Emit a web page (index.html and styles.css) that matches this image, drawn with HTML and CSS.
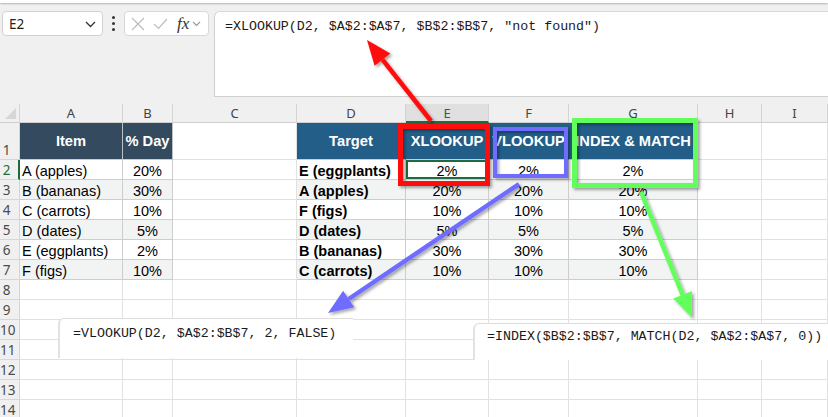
FILE: index.html
```html
<!DOCTYPE html>
<html>
<head>
<meta charset="utf-8">
<link rel="stylesheet" href="styles.css">
</head>
<body>
<div class="page">
  <div class="topstrip"></div>
  <div class="toolbar">
    <div class="namebox">
      <span class="nb-text">E2</span>
      <svg class="chev" width="11" height="7" viewBox="0 0 11 7"><path d="M1 1 L5.5 5.5 L10 1" fill="none" stroke="#333" stroke-width="1.3"/></svg>
    </div>
    <div class="dots"><span></span><span></span><span></span></div>
    <div class="fxbox">
      <svg width="14" height="14" viewBox="0 0 14 14"><path d="M1 1 L13 13 M13 1 L1 13" stroke="#bdbdbd" stroke-width="1.2" fill="none"/></svg>
      <svg width="15" height="12" viewBox="0 0 15 12"><path d="M1 6 L5.5 10.5 L14 1" stroke="#bdbdbd" stroke-width="1.2" fill="none"/></svg>
      <span class="fx">fx</span>
      <svg width="9" height="6" viewBox="0 0 9 6"><path d="M1 1 L4.5 4.5 L8 1" fill="none" stroke="#999" stroke-width="1.1"/></svg>
    </div>
    <div class="formula">=XLOOKUP(D2, $A$2:$A$7, $B$2:$B$7, "not found")</div>
  </div>

  <div class="sheet">
    <div class="corner"><span class="tri"></span></div>
    <div class="ch">A</div><div class="ch">B</div><div class="ch">C</div><div class="ch">D</div><div class="ch sel">E</div><div class="ch">F</div><div class="ch">G</div><div class="ch">H</div><div class="ch">I</div>

    <div class="rh r1">1</div>
    <div class="c hd1 ctr">Item</div><div class="c hd1 ctr">% Day</div><div class="c"></div>
    <div class="c hd2 ctr">Target</div><div class="c hd2 ctr">XLOOKUP</div><div class="c hd2 ctr clip">VLOOKUP</div><div class="c hd2 ctr clip">INDEX &amp; MATCH</div><div class="c"></div><div class="c"></div>

    <div class="rh rsel">2</div>
    <div class="c t">A (apples)</div><div class="c t ctr">20%</div><div class="c"></div>
    <div class="c t b">E (eggplants)</div><div class="c t ctr cellsel">2%</div><div class="c t ctr">2%</div><div class="c t ctr">2%</div><div class="c"></div><div class="c"></div>

    <div class="rh">3</div>
    <div class="c t alt">B (bananas)</div><div class="c t alt ctr">30%</div><div class="c"></div>
    <div class="c t alt b">A (apples)</div><div class="c t alt ctr">20%</div><div class="c t alt ctr">20%</div><div class="c t alt ctr">20%</div><div class="c"></div><div class="c"></div>

    <div class="rh">4</div>
    <div class="c t">C (carrots)</div><div class="c t ctr">10%</div><div class="c"></div>
    <div class="c t b">F (figs)</div><div class="c t ctr">10%</div><div class="c t ctr">10%</div><div class="c t ctr">10%</div><div class="c"></div><div class="c"></div>

    <div class="rh">5</div>
    <div class="c t alt">D (dates)</div><div class="c t alt ctr">5%</div><div class="c"></div>
    <div class="c t alt b">D (dates)</div><div class="c t alt ctr">5%</div><div class="c t alt ctr">5%</div><div class="c t alt ctr">5%</div><div class="c"></div><div class="c"></div>

    <div class="rh">6</div>
    <div class="c t">E (eggplants)</div><div class="c t ctr">2%</div><div class="c"></div>
    <div class="c t b">B (bananas)</div><div class="c t ctr">30%</div><div class="c t ctr">30%</div><div class="c t ctr">30%</div><div class="c"></div><div class="c"></div>

    <div class="rh">7</div>
    <div class="c t alt">F (figs)</div><div class="c t alt ctr">10%</div><div class="c"></div>
    <div class="c t alt b">C (carrots)</div><div class="c t alt ctr">10%</div><div class="c t alt ctr">10%</div><div class="c t alt ctr">10%</div><div class="c"></div><div class="c"></div>

    <div class="rh">8</div><div class="c"></div><div class="c"></div><div class="c"></div><div class="c"></div><div class="c"></div><div class="c"></div><div class="c"></div><div class="c"></div><div class="c"></div>
    <div class="rh">9</div><div class="c"></div><div class="c"></div><div class="c"></div><div class="c"></div><div class="c"></div><div class="c"></div><div class="c"></div><div class="c"></div><div class="c"></div>
    <div class="rh">10</div><div class="c"></div><div class="c"></div><div class="c"></div><div class="c"></div><div class="c"></div><div class="c"></div><div class="c"></div><div class="c"></div><div class="c"></div>
    <div class="rh">11</div><div class="c"></div><div class="c"></div><div class="c"></div><div class="c"></div><div class="c"></div><div class="c"></div><div class="c"></div><div class="c"></div><div class="c"></div>
    <div class="rh">12</div><div class="c"></div><div class="c"></div><div class="c"></div><div class="c"></div><div class="c"></div><div class="c"></div><div class="c"></div><div class="c"></div><div class="c"></div>
    <div class="rh">13</div><div class="c"></div><div class="c"></div><div class="c"></div><div class="c"></div><div class="c"></div><div class="c"></div><div class="c"></div><div class="c"></div><div class="c"></div>
    <div class="rh">14</div><div class="c"></div><div class="c"></div><div class="c"></div><div class="c"></div><div class="c"></div><div class="c"></div><div class="c"></div><div class="c"></div><div class="c"></div>
  </div>

  <div class="snip snip-v">=VLOOKUP(D2, $A$2:$B$7, 2, FALSE)</div>
  <div class="snip snip-i">=INDEX($B$2:$B$7, MATCH(D2, $A$2:$A$7, 0))</div>

  <svg class="overlay" width="828" height="417" viewBox="0 0 828 417">
    <defs>
      <filter id="sh" x="-20%" y="-20%" width="140%" height="140%">
        <feDropShadow dx="2" dy="2" stdDeviation="1.5" flood-color="#000" flood-opacity="0.35"/>
      </filter>
    </defs>
    <g filter="url(#sh)">
      <rect x="400.5" y="126.5" width="87" height="57" fill="none" stroke="#ff0a0a" stroke-width="5"/>
      <rect x="495" y="129" width="71" height="47" fill="none" stroke="#6f6cff" stroke-width="4"/>
      <rect x="574.5" y="120.5" width="121" height="65" fill="none" stroke="#62ff5c" stroke-width="5"/>

      <line x1="431" y1="121" x2="382.5" y2="59.6" stroke="#ff0a0a" stroke-width="4.5"/>
      <polygon points="367,40 390.4,53.4 374.6,65.8" fill="#ff0a0a"/>

      <line x1="519" y1="184" x2="348.7" y2="299" stroke="#6f6cff" stroke-width="4.5"/>
      <polygon points="328,313 354.3,307.3 343.1,290.7" fill="#6f6cff"/>

      <line x1="641" y1="192" x2="682.6" y2="294.8" stroke="#62ff5c" stroke-width="4.5"/>
      <polygon points="692,318 691.9,291.1 673.3,298.6" fill="#62ff5c"/>
    </g>
  </svg>
</div>
</body>
</html>
```

FILE: styles.css
```css
* { box-sizing: border-box; }
html, body { margin: 0; padding: 0; }
body {
  width: 828px;
  height: 417px;
  overflow: hidden;
  background: #f0f0f0;
  font-family: "Liberation Sans", Arial, sans-serif;
}
.page { position: relative; width: 828px; height: 417px; overflow: hidden; }

.topstrip {
  height: 3px;
  background: #fff;
  box-shadow: 0 1px 2px rgba(0,0,0,0.25);
}

.toolbar {
  display: flex;
  align-items: flex-start;
  height: 101px;
  padding-top: 8px;
  padding-left: 2px;
}
.namebox {
  width: 101px;
  height: 25px;
  background: #fff;
  border: 1px solid #d2d2d2;
  border-radius: 4px;
  display: flex;
  align-items: center;
  justify-content: space-between;
  padding: 0 6px 0 6px;
  font-family: "Noto Sans", "Open Sans", sans-serif;
  font-size: 13.5px;
  color: #222;
}
.namebox .chev { margin-top: 1px; }
.dots {
  width: 21px;
  height: 25px;
  display: flex;
  flex-direction: column;
  align-items: center;
  justify-content: center;
  gap: 3px;
}
.dots span { width: 3px; height: 3px; border-radius: 50%; background: #333; }
.fxbox {
  width: 85px;
  height: 25px;
  background: #fff;
  border: 1px solid #d8d8d8;
  border-radius: 4px;
  display: flex;
  align-items: center;
  padding: 0 3px 0 6px;
  gap: 9px;
}
.fxbox svg:nth-child(2) { margin-left: -1px; }
.fx {
  font-family: "Liberation Serif", "DejaVu Serif", serif;
  font-style: italic;
  font-size: 17px;
  color: #333;
  margin-right: -6px;
}
.formula {
  margin-left: 5px;
  flex: 1;
  height: 86px;
  background: #fff;
  border-top: 1px solid #d8d8d8;
  border-left: 1px solid #cfcfcf;
  border-bottom: 1px solid #d0d0d0;
  border-top-left-radius: 6px;
  padding: 6px 0 0 10px;
  font-family: "Liberation Mono", "DejaVu Sans Mono", monospace;
  font-size: 13.3px;
  line-height: 18px;
  color: #1a1a1a;
  white-space: pre;
}

.sheet {
  display: grid;
  grid-template-columns: 20px 103px 50px 124px 109px 83px 80px 129px 64px 66px;
  grid-template-rows: 19px 37px repeat(13, 20px);
  background: #fff;
}
.corner {
  background: #f0f0f0;
  border-right: 1px solid #d4d4d4;
  border-bottom: 1px solid #cfcfcf;
  position: relative;
}
.tri {
  position: absolute;
  right: 3px;
  bottom: 3px;
  width: 0; height: 0;
  border-left: 11px solid transparent;
  border-bottom: 11px solid #d6d6d6;
}
.ch {
  background: #f0f0f0;
  border-right: 1px solid #d4d4d4;
  border-bottom: 1px solid #cfcfcf;
  text-align: center;
  font-family: "Noto Sans", "Open Sans", sans-serif;
  font-size: 13px;
  line-height: 19px;
  color: #444;
}
.ch.sel {
  background: #e0e0e0;
  color: #1e6b41;
  border-bottom: 2px solid #1e6b41;
}
.rh {
  background: #f0f0f0;
  border-right: 1px solid #d4d4d4;
  border-bottom: 1px solid #d6d6d6;
  font-family: "Noto Sans", "Open Sans", sans-serif;
  font-size: 13.5px;
  color: #4a4a4a;
  text-align: center;
  padding-right: 6px;
  line-height: 20px;
}
.rh.r1 { display: flex; align-items: flex-end; justify-content: center; line-height: 16px; padding-bottom: 1px; }
.rh.rsel { color: #1e6b41; border-right: 2px solid #1e6b41; padding-right: 5px; }

.c {
  border-right: 1px solid #e1e1e1;
  border-bottom: 1px solid #e1e1e1;
  font-size: 14.5px;
  line-height: 18px;
  padding: 2px 2px 0 2px;
  color: #000;
  white-space: nowrap;
  overflow: hidden;
}
.c.t { border-right-color: #cdcdcd; border-bottom-color: #cdcdcd; }
.c.alt { background: #f2f4f4; }
.c.b { font-weight: bold; }
.ctr { text-align: center; }
.hd1, .hd2 {
  color: #fff;
  font-weight: bold;
  font-size: 14.7px;
  display: flex;
  align-items: center;
  justify-content: center;
  padding: 0;
}
.hd1 { background: #344a5e; border-right-color: #b9c0c7; border-bottom-color: #cdcdcd; }
.hd2 { background: #225e88; border-right-color: #225e88; border-bottom-color: #cdcdcd; }
.clip { overflow: hidden; }
.cellsel {
  box-shadow: inset 0 2px 0 #1e6b41, inset 0 -2px 0 #1e6b41, inset 2px 0 0 #1e6b41, inset -2px 0 0 #1e6b41;
}

.snip {
  position: absolute;
  background: #fff;
  border-top: 1px solid #dcdcdc;
  border-left: 2px solid #e2e2e2;
  border-top-left-radius: 6px;
  font-family: "Liberation Mono", "DejaVu Sans Mono", monospace;
  font-size: 13.3px;
  line-height: 18px;
  color: #1a1a1a;
  white-space: pre;
}
.snip-v { left: 58px; top: 318px; width: 295px; height: 40px; padding: 6px 0 0 13px; }
.snip-i { left: 473px; top: 323px; width: 355px; height: 37px; padding: 4px 0 0 12px; }

.overlay { position: absolute; left: 0; top: 0; pointer-events: none; }
```
